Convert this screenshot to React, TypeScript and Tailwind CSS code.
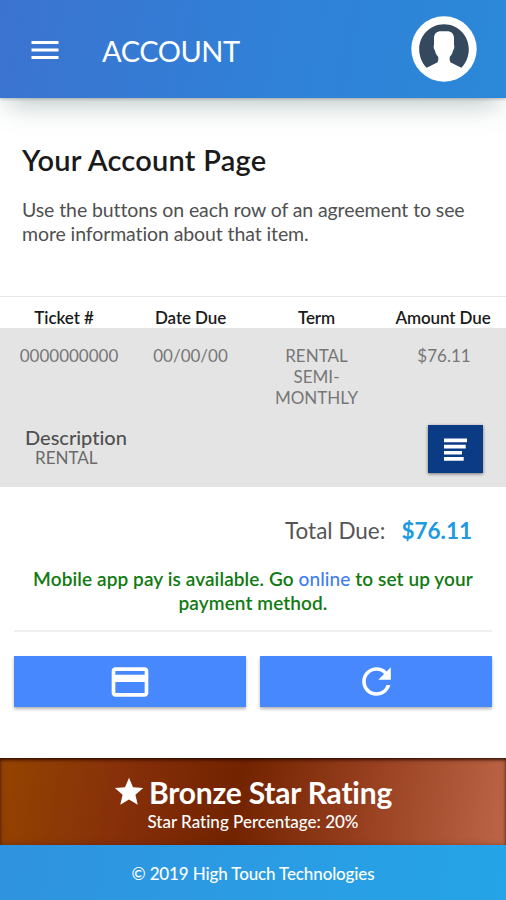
/**
 * Account page: agreements, total due and star rating
 */

import { MdCreditCard, MdMenu, MdRefresh, MdStar } from 'react-icons/md';

interface Agreement {
  ticket: string;
  dateDue: string;
  term: string;
  amountDue: string;
  description: string;
}

const agreements: Agreement[] = [
  {
    ticket: '0000000000',
    dateDue: '00/00/00',
    term: 'RENTAL SEMI-MONTHLY',
    amountDue: '$76.11',
    description: 'RENTAL',
  },
];

function Avatar() {
  return (
    <svg viewBox="0 0 66 66" className="h-[66px] w-[66px]">
      <circle cx="33" cy="33" r="32.7" fill="#fff" />
      <path
        d="M15.700 51.800C11 47 8.200 40.500 8.200 33.200C8.200 19.500 19.300 8.300 33 8.300S57.800 19.500 57.800 33.200C57.800 40.500 55 47 50.300 51.800L39.800 46.500C38.500 45.300 38.300 42 39 40.500C40.700 38.800 41.600 37 41.900 34.700C43.200 33.500 43.700 30.500 43 28.500V22.500C43 17.800 40.300 15.300 36 15.300H30C25.700 15.300 23 17.800 23 22.500V28.500C22.300 30.500 22.800 33.500 24.100 34.700C24.400 37 25.300 38.800 27 40.500C27.700 42 27.500 45.300 26.200 46.500Z"
        fill="#34495e"
      />
    </svg>
  );
}

function Header() {
  return (
    <header className="flex h-[98px] items-center bg-linear-[100deg,#3b73d0,#2f82d8_60%,#2b88d8] pl-[27px] pr-[29px] shadow-[0_14px_26px_-8px_rgba(85,115,115,0.42),0_1px_3px_rgba(0,0,0,0.25)]">
      <button className="mt-[2px] text-white">
        <MdMenu className="h-[36px] w-[36px]" />
      </button>
      <h1 className="ml-[39px] mt-[3px] flex-1 text-[29px] leading-9 tracking-[-0.45px] text-white">ACCOUNT</h1>
      <Avatar />
    </header>
  );
}

function AgreementRow({ agreement }: { agreement: Agreement }) {
  return (
    <div className="h-[159px] bg-[#e4e4e4] text-[#777]">
      <div className="grid h-[96px] grid-cols-[130px_121px_131px_1fr] pt-[17px] text-center text-[17px] leading-[21px]">
        <div className="pl-[8px]">{agreement.ticket}</div>
        <div>{agreement.dateDue}</div>
        <div className="px-5">{agreement.term}</div>
        <div>{agreement.amountDue}</div>
      </div>
      <div className="flex justify-between pl-[25px] pr-[23px]">
        <div className="pt-[3px]">
          <div className="text-[20px] font-medium leading-[21px] text-[#505050]">Description</div>
          <div className="pl-[10px] text-[17px] leading-[20px] text-[#6b6b6b]">{agreement.description}</div>
        </div>
        <button className="mt-[1px] flex h-[48px] w-[55px] items-center justify-center bg-[#0b3b84] shadow-[0_1px_3px_rgba(0,0,0,0.5)]">
          <svg viewBox="0 0 24 24" className="h-[24px] w-[24px]" fill="#fff">
            <path d="M0 1.500h23v3.700H0zM0 7.800h21.700v3.700H0zM0 14h18v3.600H0zM0 20h19.700v3.700H0z" />
          </svg>
        </button>
      </div>
    </div>
  );
}

export default function App() {
  return (
    <div className="flex h-[900px] w-[506px] flex-col overflow-hidden bg-white font-['Lato',sans-serif] [font-variant-ligatures:none]">
      <Header />

      <section className="h-[198px] pl-[22px] pt-[44px]">
        <h2 className="text-[29px] font-semibold leading-9 tracking-[0.25px] text-[#1a1a1a]">Your Account Page</h2>
        <p className="mt-[20px] w-[460px] text-[19.500px] leading-6 tracking-[-0.1px] text-[#505050]">
          Use the buttons on each row of an agreement to see more information about that item.
        </p>
      </section>

      <div className="grid h-[32px] grid-cols-[128px_125px_127px_1fr] border-t border-[#e8e8e8] pt-[11px] text-center text-[17px] font-semibold leading-5 tracking-[-0.1px] text-[#1a1a1a]">
        <div>Ticket #</div>
        <div>Date Due</div>
        <div>Term</div>
        <div>Amount Due</div>
      </div>
      {agreements.map((agreement) => (
        <AgreementRow key={agreement.ticket} agreement={agreement} />
      ))}

      <div className="flex justify-end gap-[16px] pr-[34px] pt-[29px] text-[22.500px] leading-[30px] text-[#555]">
        <span>Total Due:</span>
        <span className="font-bold text-[#1d9ae2]">$76.11</span>
      </div>

      <p className="mx-[20px] mt-[21px] text-center text-[19px] font-semibold leading-6 tracking-[0.1px] text-[#117a11]">
        Mobile app pay is available. Go <a className="font-medium text-[#3f7df5]">online</a> to set up your payment method.
      </p>

      <hr className="mx-[14px] mt-[15px] border-t-2 border-[#efefef]" />

      <div className="mx-[14px] mt-[24px] grid grid-cols-2 gap-[14px]">
        <button className="flex h-[51px] items-center justify-center bg-[#4788ff] text-white shadow-[0_2px_3px_rgba(0,0,0,0.3)]">
          <MdCreditCard className="h-[44px] w-[44px]" />
        </button>
        <button className="flex h-[51px] items-center justify-center bg-[#4788ff] text-white shadow-[0_2px_3px_rgba(0,0,0,0.3)]">
          <MdRefresh className="h-[43px] w-[43px]" />
        </button>
      </div>

      <div className="mt-auto h-[87px] bg-linear-[100deg,#954400,#87300a_24%,#722300_47%,#984020_72%,#bd6748] pt-[16px] text-center text-white shadow-[inset_0_2px_3px_rgba(40,10,0,0.8),inset_0_0_6px_rgba(60,20,0,0.3)]">
        <div className="flex items-center justify-center pr-[2px] text-[30px] font-bold leading-9 tracking-[-0.2px]">
          <MdStar className="mr-[3px] h-[34px] w-[34px]" />
          Bronze Star Rating
        </div>
        <div className="pt-[2px] text-[17px] font-medium leading-5">Star Rating Percentage: 20%</div>
      </div>
      <footer className="h-[55px] bg-linear-[100deg,#3093df,#25a4e8] text-center text-[17px] font-medium leading-[57px] tracking-[-0.13px] text-white">
        © 2019 High Touch Technologies
      </footer>
    </div>
  );
}
